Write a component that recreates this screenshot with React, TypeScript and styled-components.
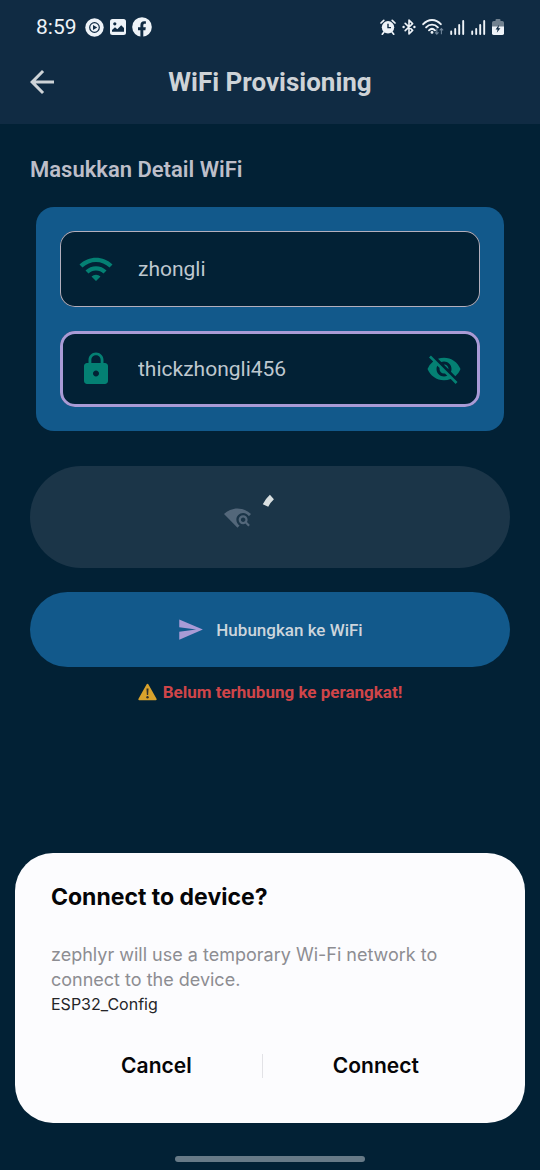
import React, { useState } from "react";
import styled, { createGlobalStyle } from "styled-components";
import { MdArrowBack, MdLock, MdSend, MdVisibility, MdVisibilityOff, MdWifi, MdWifiFind } from "react-icons/md";

const GlobalStyle = createGlobalStyle`
  *, *::before, *::after { box-sizing: border-box; }
  body {
    margin: 0;
    background: #022135;
    font-family: Roboto, "Liberation Sans", sans-serif;
  }
  h1, h2, p { margin: 0; }
  button, input { font: inherit; }
  button { border: 0; padding: 0; background: none; cursor: pointer; }
  svg { display: block; flex: none; }
`;

const Screen = styled.div`
  min-height: 100vh;
  display: flex;
  flex-direction: column;
`;

const TopArea = styled.header`
  background: #102b43;
`;

const StatusBar = styled.div`
  display: flex;
  justify-content: space-between;
  align-items: center;
  height: 54px;
  padding: 0 36px;
  color: #eef3f8;
`;

const StatusGroup = styled.div`
  display: flex;
  align-items: center;
  gap: 6px;
`;

const Clock = styled.time`
  font-size: 21px;
  line-height: 24px;
  margin-right: 2px;
`;

const AppBar = styled.div`
  display: grid;
  grid-template-columns: 36px 1fr 36px;
  align-items: center;
  padding: 10px 24px 24px;
  color: #ced3d7;
`;

const BackButton = styled.button`
  color: inherit;
  height: 36px;
`;

const Title = styled.h1`
  font-size: 26px;
  line-height: 36px;
  font-weight: 700;
  text-align: center;
`;

const Content = styled.main`
  display: flex;
  flex-direction: column;
  padding: 30px;
`;

const SectionTitle = styled.h2`
  font-size: 22px;
  line-height: 32px;
  font-weight: 600;
  color: #bdbec9;
`;

const Card = styled.form`
  display: flex;
  flex-direction: column;
  gap: 24px;
  margin: 21px 6px 35px;
  padding: 24px;
  border-radius: 18px;
  background: #12598b;
`;

const Field = styled.label<{ $focused?: boolean }>`
  display: flex;
  align-items: center;
  gap: 24px;
  height: 76px;
  padding: 0 18px;
  border-radius: 15px;
  background: #022135;
  color: #048073;
  box-shadow: inset 0 0 0 ${(p) => (p.$focused ? "3px #a99bd6" : "1px #b3afbd")};
`;

const FieldInput = styled.input`
  flex: 1;
  min-width: 0;
  padding: 0;
  border: 0;
  outline: 0;
  background: transparent;
  color: #bfc8cf;
  font-size: 21px;
  line-height: 30px;
`;

const IconButton = styled.button`
  color: inherit;
`;

const PillButton = styled.button<{ $busy?: boolean }>`
  display: flex;
  align-items: center;
  justify-content: center;
  gap: 12px;
  padding: 24px;
  min-height: 75px;
  border-radius: 51px;
  background: ${(p) => (p.$busy ? "#1b3548" : "#12598b")};
  color: ${(p) => (p.$busy ? "#53677a" : "#a99bd6")};
  & + & { margin-top: 24px; }
`;

const ButtonText = styled.span`
  font-size: 17px;
  line-height: 24px;
  font-weight: 500;
  color: #ccd5dc;
`;

const Warning = styled.p`
  display: flex;
  align-items: center;
  justify-content: center;
  gap: 6px;
  margin-top: 12px;
  font-size: 17px;
  line-height: 26px;
  font-weight: 700;
  color: #cf4549;
`;

const BottomLayer = styled.div`
  position: fixed;
  left: 0;
  right: 0;
  bottom: 0;
  display: flex;
  flex-direction: column;
  padding: 0 15px 8px;
`;

const Dialog = styled.section`
  padding: 28px 36px 36px;
  border-radius: 38px;
  background: #fcfcfe;
  color: #050507;
  font-family: Inter, Roboto, sans-serif;
`;

const DialogTitle = styled.h2`
  font-size: 23px;
  line-height: 33px;
  font-weight: 700;
`;

const DialogText = styled.p`
  margin-top: 28px;
  font-size: 18px;
  line-height: 25px;
  color: #8d8d92;
`;

const NetworkName = styled.p`
  font-size: 16px;
  line-height: 25px;
  color: #252528;
`;

const DialogActions = styled.div`
  display: flex;
  align-items: center;
  margin-top: 27px;
`;

const DialogButton = styled.button`
  flex: 1 1 auto;
  height: 43px;
  color: inherit;
  font-size: 21px;
  line-height: 28px;
  font-weight: 600;
`;

const Divider = styled.span`
  width: 1px;
  height: 24px;
  background: #e2e2e6;
`;

const HomeBar = styled.div`
  align-self: center;
  width: 190px;
  height: 6px;
  margin-top: 33px;
  border-radius: 3px;
  background: #677a87;
`;

const PlayIcon = () => (
  <svg width="19" height="19" viewBox="0 0 19 19">
    <circle cx="9.5" cy="9.5" r="9.2" fill="currentColor" />
    <circle cx="9.5" cy="9.5" r="4.8" fill="none" stroke="#102b43" strokeWidth="1.2" />
    <path d="M8 7l4.2 2.5L8 12z" fill="#102b43" />
  </svg>
);

const PictureIcon = () => (
  <svg width="16" height="16" viewBox="0 0 16 16">
    <rect width="16" height="16" rx="2.5" fill="currentColor" />
    <circle cx="4.8" cy="4.8" r="1.6" fill="#102b43" />
    <path d="M2 12.8V11l3-2.8 2.3 2 3.9-4 2.8 2.8v3.8z" fill="#102b43" />
  </svg>
);

const FacebookIcon = () => (
  <svg width="20" height="20" viewBox="0 0 20 20">
    <circle cx="10" cy="10" r="9.8" fill="currentColor" />
    <path d="M8.4 20v-6.8H6v-2.9h2.4V8.2c0-2.6 1.5-3.9 3.7-3.9.9 0 1.8.1 1.8.1v2.4h-1.1c-1.1 0-1.5.7-1.5 1.4v2.1h2.5l-.4 2.9h-2.1V20z" fill="#102b43" />
  </svg>
);

const AlarmIcon = () => (
  <svg width="16" height="16" viewBox="0 0 16 16">
    <circle cx="8" cy="8.3" r="6.2" fill="currentColor" />
    <path d="M1 4l2.8-2.7M15 4l-2.8-2.7M3.8 13.2l-1.5 2M12.2 13.2l1.5 2" stroke="currentColor" strokeWidth="1.7" strokeLinecap="round" />
    <path d="M8 4.8v3.8h3" fill="none" stroke="#102b43" strokeWidth="1.4" />
  </svg>
);

const BluetoothIcon = () => (
  <svg width="14" height="16" viewBox="0 0 14 16">
    <path d="M3.2 4.4l7.4 7L7 14.9V1.1l3.6 3.5-7.4 7" fill="none" stroke="currentColor" strokeWidth="1.6" strokeLinejoin="round" strokeLinecap="round" />
    <circle cx="1.6" cy="8" r="1.2" fill="currentColor" />
    <circle cx="12.4" cy="8" r="1.2" fill="currentColor" />
  </svg>
);

const StatusWifiIcon = () => (
  <svg width="22" height="18" viewBox="0 0 22 18">
    <g fill="none" stroke="currentColor" strokeWidth="1.9" strokeLinecap="round">
      <path d="M1.2 6.2C6.2.6 13.8.6 18.8 6.2" />
      <path d="M4.1 9.4c3.3-3.7 8.5-3.7 11.8 0" />
      <path d="M7 12.3c1.8-1.8 4.2-1.8 6 0" />
    </g>
    <circle cx="10" cy="14.4" r="1.4" fill="currentColor" />
    <path d="M14.8 10.5v5.6m-1.7-1.8l1.7 1.8 1.7-1.8M19.4 16.2v-5.6m-1.7 1.8l1.7-1.8 1.7 1.8" fill="none" stroke="#71869a" strokeWidth="1.1" />
  </svg>
);

const SignalIcon = () => (
  <svg width="15" height="15" viewBox="0 0 15 15">
    <path d="M1.2 14v-2.5M5.2 14V9M9.2 14V5M13.2 14V1" stroke="currentColor" strokeWidth="1.9" strokeLinecap="round" />
  </svg>
);

const BatteryIcon = () => (
  <svg width="12" height="16" viewBox="0 0 12 16">
    <path d="M3.5 2V1q0-1 1-1h3q1 0 1 1v1h1.7Q12 2 12 3.8v10.4q0 1.8-1.8 1.8H1.8Q0 16 0 14.2V3.8Q0 2 1.8 2z" fill="#71818f" />
    <path d="M0 7.5h12v6.7q0 1.8-1.8 1.8H1.8Q0 16 0 14.2z" fill="currentColor" />
    <path d="M7 5.8L3.6 10.4h2l-.8 3.4 3.6-4.6h-2z" fill="#102b43" />
  </svg>
);

const Spinner = () => (
  <svg width="54" height="54" viewBox="0 0 54 54" overflow="visible" aria-label="Memuat">
    <path d="M2.5 15.6A27 27 0 0 1 8.9 6.9" fill="none" stroke="#d9dfe0" strokeWidth="6" />
  </svg>
);

const AlertIcon = () => (
  <svg width="19" height="18" viewBox="0 0 19 18" aria-hidden="true">
    <path d="M9.5.8q.6 0 1 .8l8 14.2q.6 1.4-.8 1.4H1.3q-1.4 0-.8-1.4l8-14.2q.4-.8 1-.8z" fill="#d8a22c" />
    <path d="M8.5 5.6h2l-.4 6.4H8.9z" fill="#33302b" />
    <circle cx="9.5" cy="14.2" r="1.2" fill="#33302b" />
  </svg>
);

export default function App() {
  const [ssid, setSsid] = useState("zhongli");
  const [password, setPassword] = useState("thickzhongli456");
  const [shown, setShown] = useState(true);

  return (
    <Screen>
      <GlobalStyle />
      <TopArea>
        <StatusBar>
          <StatusGroup>
            <Clock>8:59</Clock>
            <PlayIcon />
            <PictureIcon />
            <FacebookIcon />
          </StatusGroup>
          <StatusGroup>
            <AlarmIcon />
            <BluetoothIcon />
            <StatusWifiIcon />
            <SignalIcon />
            <SignalIcon />
            <BatteryIcon />
          </StatusGroup>
        </StatusBar>
        <AppBar>
          <BackButton type="button" aria-label="Kembali">
            <MdArrowBack size={36} />
          </BackButton>
          <Title>WiFi Provisioning</Title>
        </AppBar>
      </TopArea>

      <Content>
        <SectionTitle>Masukkan Detail WiFi</SectionTitle>
        <Card id="wifi" onSubmit={(e) => e.preventDefault()}>
          <Field>
            <MdWifi size={36} />
            <FieldInput aria-label="SSID" value={ssid} onChange={(e) => setSsid(e.target.value)} />
          </Field>
          <Field $focused>
            <MdLock size={36} />
            <FieldInput
              aria-label="Password"
              type={shown ? "text" : "password"}
              value={password}
              onChange={(e) => setPassword(e.target.value)}
            />
            <IconButton type="button" aria-label="Tampilkan password" onClick={() => setShown(!shown)}>
              {shown ? <MdVisibilityOff size={36} /> : <MdVisibility size={36} />}
            </IconButton>
          </Field>
        </Card>
        <PillButton type="button" $busy disabled aria-label="Cari WiFi">
          <MdWifiFind size={27} />
          <Spinner />
        </PillButton>
        <PillButton type="submit" form="wifi">
          <MdSend size={27} />
          <ButtonText>Hubungkan ke WiFi</ButtonText>
        </PillButton>
        <Warning role="alert">
          <AlertIcon />
          Belum terhubung ke perangkat!
        </Warning>
      </Content>

      <BottomLayer>
        <Dialog role="dialog" aria-labelledby="dialog-title">
          <DialogTitle id="dialog-title">Connect to device?</DialogTitle>
          <DialogText>zephlyr will use a temporary Wi-Fi network to connect to the device.</DialogText>
          <NetworkName>ESP32_Config</NetworkName>
          <DialogActions>
            <DialogButton type="button">Cancel</DialogButton>
            <Divider />
            <DialogButton type="button">Connect</DialogButton>
          </DialogActions>
        </Dialog>
        <HomeBar />
      </BottomLayer>
    </Screen>
  );
}
